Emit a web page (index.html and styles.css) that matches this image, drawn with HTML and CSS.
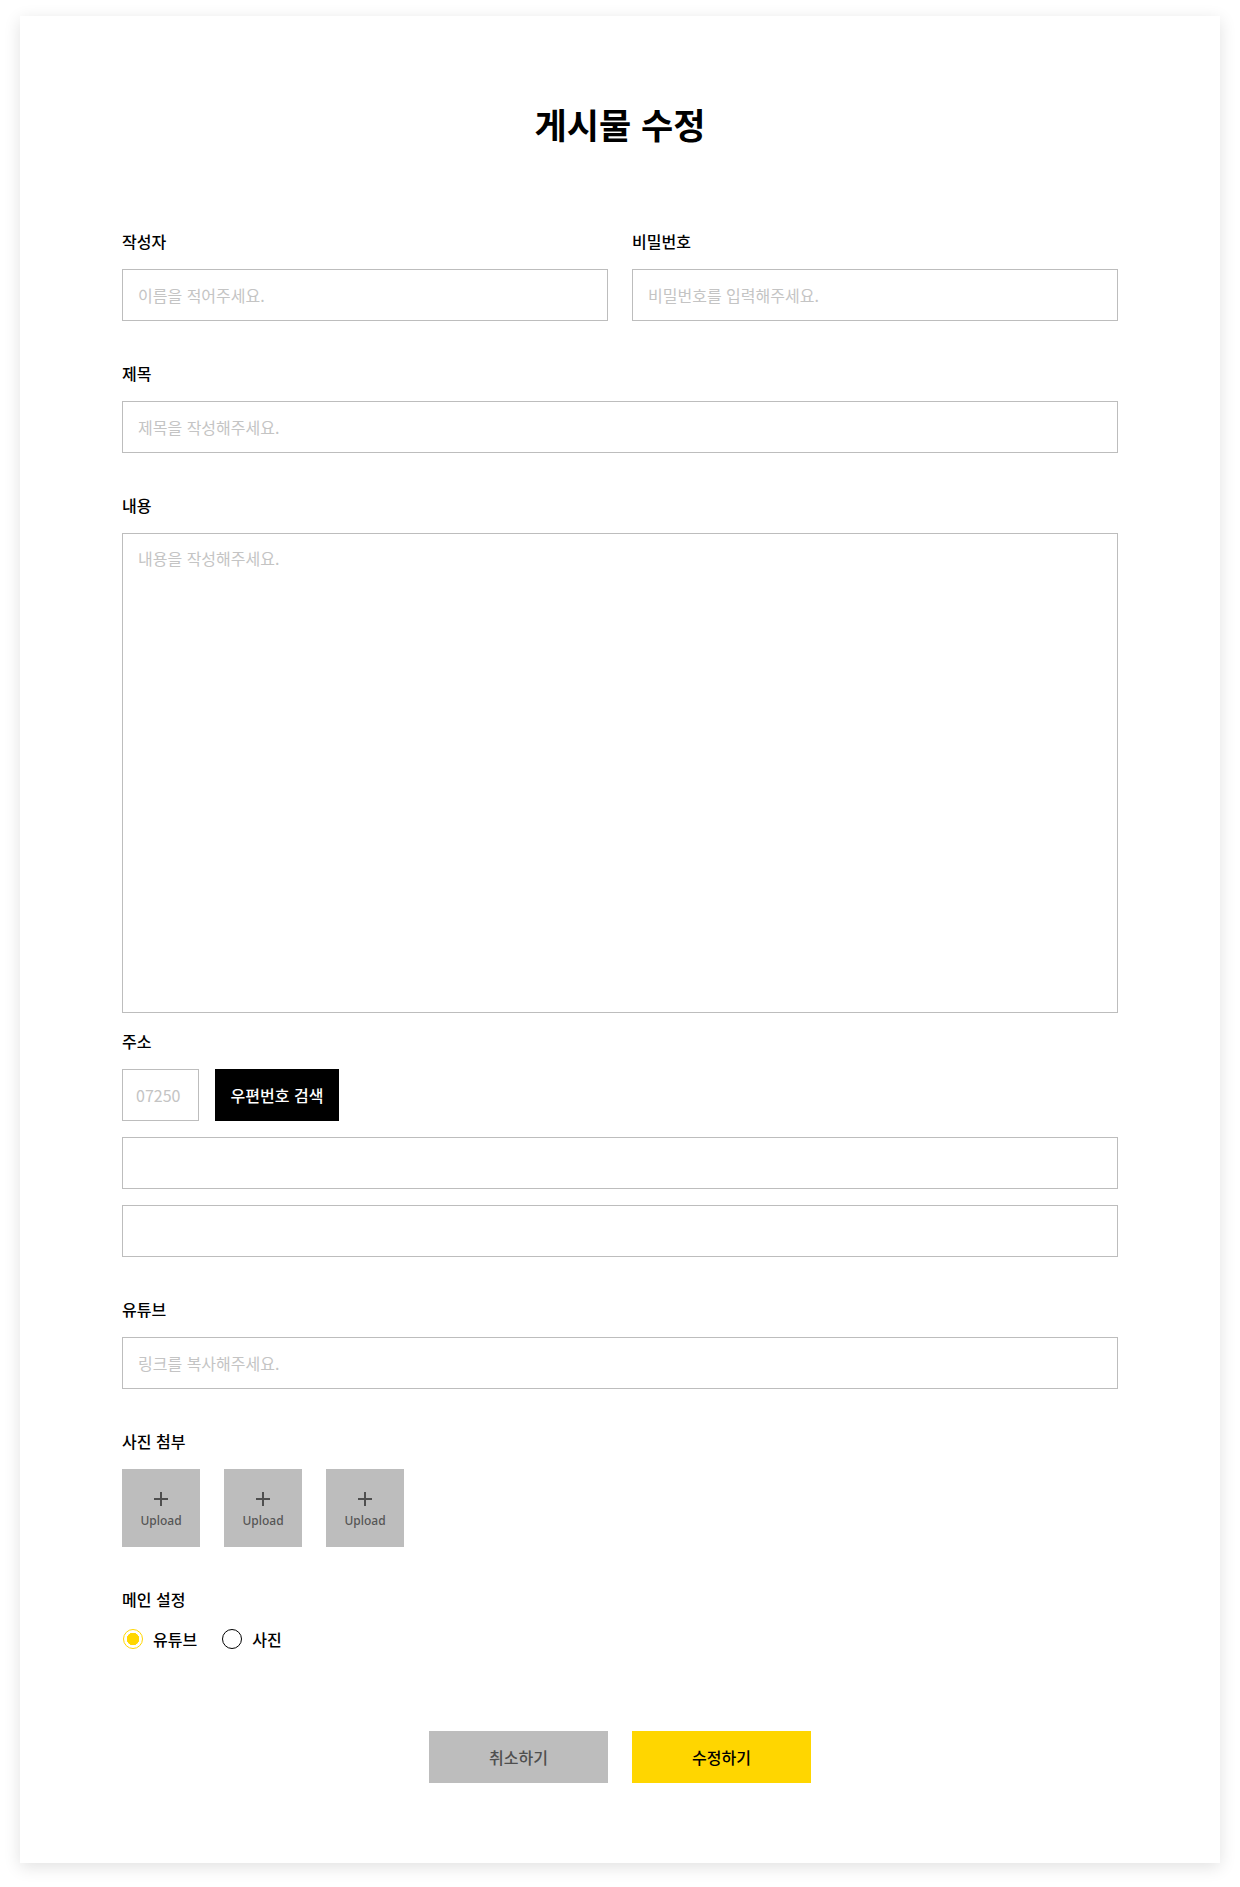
FILE: index.html
```html
<!DOCTYPE html>
<html lang="ko">
<head>
    <meta charset="UTF-8">
    <meta name="viewport" content="width=device-width, initial-scale=1.0">
    <title>게시물 수정</title>
    <link rel="stylesheet" href="styles.css">
</head>
<body>
    <div class="wrapper">
        <div class="card">
            <h1 class="title">게시물 수정</h1>
            <form class="board-form">
                <div class="row">
                    <div class="field">
                        <label class="label">작성자</label>
                        <input class="input" type="text" placeholder="이름을 적어주세요.">
                    </div>
                    <div class="field">
                        <label class="label">비밀번호</label>
                        <input class="input" type="password" placeholder="비밀번호를 입력해주세요.">
                    </div>
                </div>
                <div class="field">
                    <label class="label">제목</label>
                    <input class="input" type="text" placeholder="제목을 작성해주세요.">
                </div>
                <div class="field field-tight">
                    <label class="label">내용</label>
                    <textarea class="input textarea" placeholder="내용을 작성해주세요."></textarea>
                </div>
                <div class="field">
                    <label class="label">주소</label>
                    <div class="zip-row">
                        <input class="input zip" type="text" placeholder="07250">
                        <button type="button" class="zip-button">우편번호 검색</button>
                    </div>
                    <input class="input address" type="text">
                    <input class="input address" type="text">
                </div>
                <div class="field">
                    <label class="label">유튜브</label>
                    <input class="input" type="text" placeholder="링크를 복사해주세요.">
                </div>
                <div class="field">
                    <label class="label">사진 첨부</label>
                    <div class="uploads">
                        <button type="button" class="upload"><span class="plus"></span><span>Upload</span></button>
                        <button type="button" class="upload"><span class="plus"></span><span>Upload</span></button>
                        <button type="button" class="upload"><span class="plus"></span><span>Upload</span></button>
                    </div>
                </div>
                <div class="field">
                    <label class="label">메인 설정</label>
                    <div class="radios">
                        <label class="radio-label">
                            <input type="radio" name="main" class="radio" checked>
                            <span>유튜브</span>
                        </label>
                        <label class="radio-label">
                            <input type="radio" name="main" class="radio">
                            <span>사진</span>
                        </label>
                    </div>
                </div>
                <div class="buttons">
                    <button type="button" class="btn btn-cancel">취소하기</button>
                    <button type="submit" class="btn btn-submit">수정하기</button>
                </div>
            </form>
        </div>
    </div>
</body>
</html>
```

FILE: styles.css
```css
body {
    margin: 0;
    background-color: #ffffff;
    font-family: "Noto Sans CJK KR", "Noto Sans", sans-serif;
    color: #000000;
}
.wrapper {
    padding: 16px 20px 24px 20px;
}
.card {
    width: 1200px;
    box-sizing: border-box;
    padding: 84px 0 80px 0;
    background-color: #ffffff;
    box-shadow: 0 4px 16px rgba(0, 0, 0, 0.12);
}
.title {
    margin: 0 0 82px 0;
    font-size: 35px;
    line-height: 48px;
    font-weight: 700;
    text-align: center;
}
.board-form {
    width: 996px;
    margin: 0 auto;
}
.row {
    display: flex;
    gap: 24px;
}
.row .field {
    flex: 1;
}
.field {
    display: flex;
    flex-direction: column;
    margin-bottom: 41px;
}
.field-tight {
    margin-bottom: 17px;
}
.label {
    display: block;
    font-size: 16px;
    line-height: 22px;
    font-weight: 500;
    margin-bottom: 17px;
}
.input {
    display: block;
    box-sizing: border-box;
    width: 100%;
    height: 52px;
    margin: 0;
    padding: 0 15px;
    border: 1px solid #bdbdbd;
    background: #ffffff;
    font-family: inherit;
    font-size: 16px;
    font-weight: 400;
    color: #000000;
    outline: none;
}
.input::placeholder {
    color: #c4c4c4;
}
.textarea {
    height: 480px;
    padding: 13px 15px;
    resize: none;
    line-height: 22px;
}
.zip-row {
    display: flex;
    gap: 16px;
}
.zip {
    width: 77px;
    padding: 0 13px;
}
.zip-button {
    width: 124px;
    height: 52px;
    border: none;
    background-color: #000000;
    color: #ffffff;
    font-family: inherit;
    font-size: 16px;
    font-weight: 500;
    cursor: pointer;
}
.address {
    margin-top: 16px;
}
.uploads {
    display: flex;
    gap: 24px;
}
.upload {
    width: 78px;
    height: 78px;
    border: none;
    padding: 4px 0 0 0;
    background-color: #bdbdbd;
    color: #555555;
    font-family: "Noto Sans", sans-serif;
    font-size: 12px;
    font-weight: 500;
    display: flex;
    flex-direction: column;
    align-items: center;
    justify-content: center;
    gap: 6px;
    cursor: pointer;
}
.plus {
    position: relative;
    width: 14px;
    height: 14px;
}
.plus::before,
.plus::after {
    content: "";
    position: absolute;
    background-color: #4f4f4f;
}
.plus::before {
    left: 6px;
    top: 0;
    width: 2px;
    height: 14px;
}
.plus::after {
    left: 0;
    top: 6px;
    width: 14px;
    height: 2px;
}
.radios {
    display: flex;
    gap: 24px;
    height: 24px;
    align-items: center;
}
.radio-label {
    display: flex;
    align-items: center;
    gap: 10px;
    font-size: 16px;
    font-weight: 500;
    cursor: pointer;
}
.radio {
    appearance: none;
    -webkit-appearance: none;
    box-sizing: border-box;
    width: 20px;
    height: 20px;
    margin: 0 0 0 1px;
    border: 1.5px solid #000000;
    border-radius: 50%;
    background: #ffffff;
}
.radio:checked {
    border: 1.5px solid #ffd600;
    background: radial-gradient(circle, #ffd600 0, #ffd600 6px, #ffffff 6.5px);
}
.buttons {
    display: flex;
    justify-content: center;
    gap: 24px;
    margin-top: 80px;
}
.btn {
    width: 179px;
    height: 52px;
    border: none;
    font-family: inherit;
    font-size: 16px;
    font-weight: 500;
    cursor: pointer;
}
.btn-cancel {
    background-color: #bdbdbd;
    color: #4f4f4f;
}
.btn-submit {
    background-color: #ffd600;
    color: #000000;
}
```
